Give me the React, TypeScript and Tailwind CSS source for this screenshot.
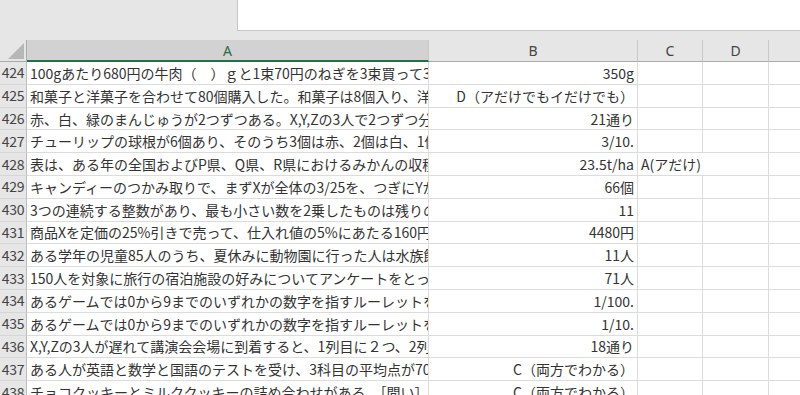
import type { ReactNode } from "react";

// Visible slice of the worksheet — column A text is clipped by column B.
const ROWS: { n: number; a: string; b: string; c?: string }[] = [
  { n: 424, a: "100gあたり680円の牛肉（　）ｇと1束70円のねぎを3束買って3000円支払った。", b: "350g" },
  { n: 425, a: "和菓子と洋菓子を合わせて80個購入した。和菓子は8個入り、洋菓子は5個入りの箱で買った。", b: "D（アだけでもイだけでも）" },
  { n: 426, a: "赤、白、緑のまんじゅうが2つずつある。X,Y,Zの3人で2つずつ分けるとき、", b: "21通り" },
  { n: 427, a: "チューリップの球根が6個あり、そのうち3個は赤、2個は白、1個は黄色の花が咲く。", b: "3/10." },
  { n: 428, a: "表は、ある年の全国およびP県、Q県、R県におけるみかんの収穫量を示している。", b: "23.5t/ha", c: "A(アだけ)" },
  { n: 429, a: "キャンディーのつかみ取りで、まずXが全体の3/25を、つぎにYが残りの", b: "66個" },
  { n: 430, a: "3つの連続する整数があり、最も小さい数を2乗したものは残りの2つの数の和より", b: "11" },
  { n: 431, a: "商品Xを定価の25%引きで売って、仕入れ値の5%にあたる160円の利益を得た。", b: "4480円" },
  { n: 432, a: "ある学年の児童85人のうち、夏休みに動物園に行った人は水族館に行った人より", b: "11人" },
  { n: 433, a: "150人を対象に旅行の宿泊施設の好みについてアンケートをとった。", b: "71人" },
  { n: 434, a: "あるゲームでは0から9までのいずれかの数字を指すルーレットを2回まわす。", b: "1/100." },
  { n: 435, a: "あるゲームでは0から9までのいずれかの数字を指すルーレットを2回まわす。", b: "1/10." },
  { n: 436, a: "X,Y,Zの3人が遅れて講演会会場に到着すると、1列目に２つ、2列目に３つ空席があった。", b: "18通り" },
  { n: 437, a: "ある人が英語と数学と国語のテストを受け、3科目の平均点が70点だった。", b: "C（両方でわかる）" },
  { n: 438, a: "チョコクッキーとミルククッキーの詰め合わせがある。［問い］クッキーは全部で何枚か。", b: "C（両方でわかる）" },
];

const font = "font-['Noto_Sans_CJK_JP','Noto_Sans',sans-serif]";

function HeadCell({ w, children, last }: { w: string; children?: ReactNode; last?: boolean }) {
  return (
    <div
      className={`${w} h-full flex items-center justify-center text-[14px] text-[#444] border-b border-[#ababab] ${last ? "" : "border-r border-r-[#c8c8c8]"} font-['Noto_Sans',sans-serif]`}
    >
      {children}
    </div>
  );
}

export default function App() {
  return (
    <div className={`w-[800px] h-[395px] overflow-hidden bg-[#e6e6e6] ${font}`}>
      {/* formula bar strip */}
      <div className="h-[40px] flex">
        <div className="w-[237px]" />
        <div className="flex-1 h-[31px] bg-white border-l border-b border-[#c6c6c6]" />
      </div>

      {/* column headers */}
      <div className="h-[22px] flex">
        <div className="w-[27px] h-full relative border-r border-b border-[#ababab]">
          <svg className="absolute left-[8px] top-[3px]" width="16" height="16" viewBox="0 0 16 16">
            <polygon points="16,0 16,16 0,16" fill="#b7b7b7" />
          </svg>
        </div>
        <div className="w-[402px] h-full bg-[#d2d2d2] border-b-2 border-[#217346] border-r border-r-[#c8c8c8] flex items-center justify-center text-[14px] text-[#2b6b46] font-['Noto_Sans',sans-serif]">
          A
        </div>
        <HeadCell w="w-[209px]">B</HeadCell>
        <HeadCell w="w-[65px]">C</HeadCell>
        <HeadCell w="w-[66px]">D</HeadCell>
        <div className="flex-1 h-full border-b border-[#ababab]" />
      </div>

      {/* rows */}
      {ROWS.map((r) => (
        <div key={r.n} className="h-[22.8px] flex text-[14px] text-[#333]">
          <div className="w-[27px] h-full flex items-center justify-center text-[#444] border-r border-[#bdbdbd] border-b border-b-[#d6d6d6] tracking-[-0.3px]">
            {r.n}
          </div>
          <div className="w-[402px] h-full bg-white border-r border-b border-[#dcdcdc] overflow-hidden whitespace-nowrap pl-[3px] flex items-center pt-[1px]">
            {r.a}
          </div>
          <div className="w-[209px] h-full bg-white border-r border-b border-[#dcdcdc] whitespace-nowrap flex items-center justify-end pr-[3px] pt-[1px]">
            {r.b}
          </div>
          <div
            className={`w-[65px] h-full bg-white border-b border-[#dcdcdc] whitespace-nowrap flex items-center pl-[3px] pt-[1px] relative z-10 ${r.c ? "" : "border-r"}`}
          >
            {r.c}
          </div>
          <div className="w-[66px] h-full bg-white border-r border-b border-[#dcdcdc]" />
          <div className="flex-1 h-full bg-white border-b border-[#dcdcdc]" />
        </div>
      ))}
    </div>
  );
}
